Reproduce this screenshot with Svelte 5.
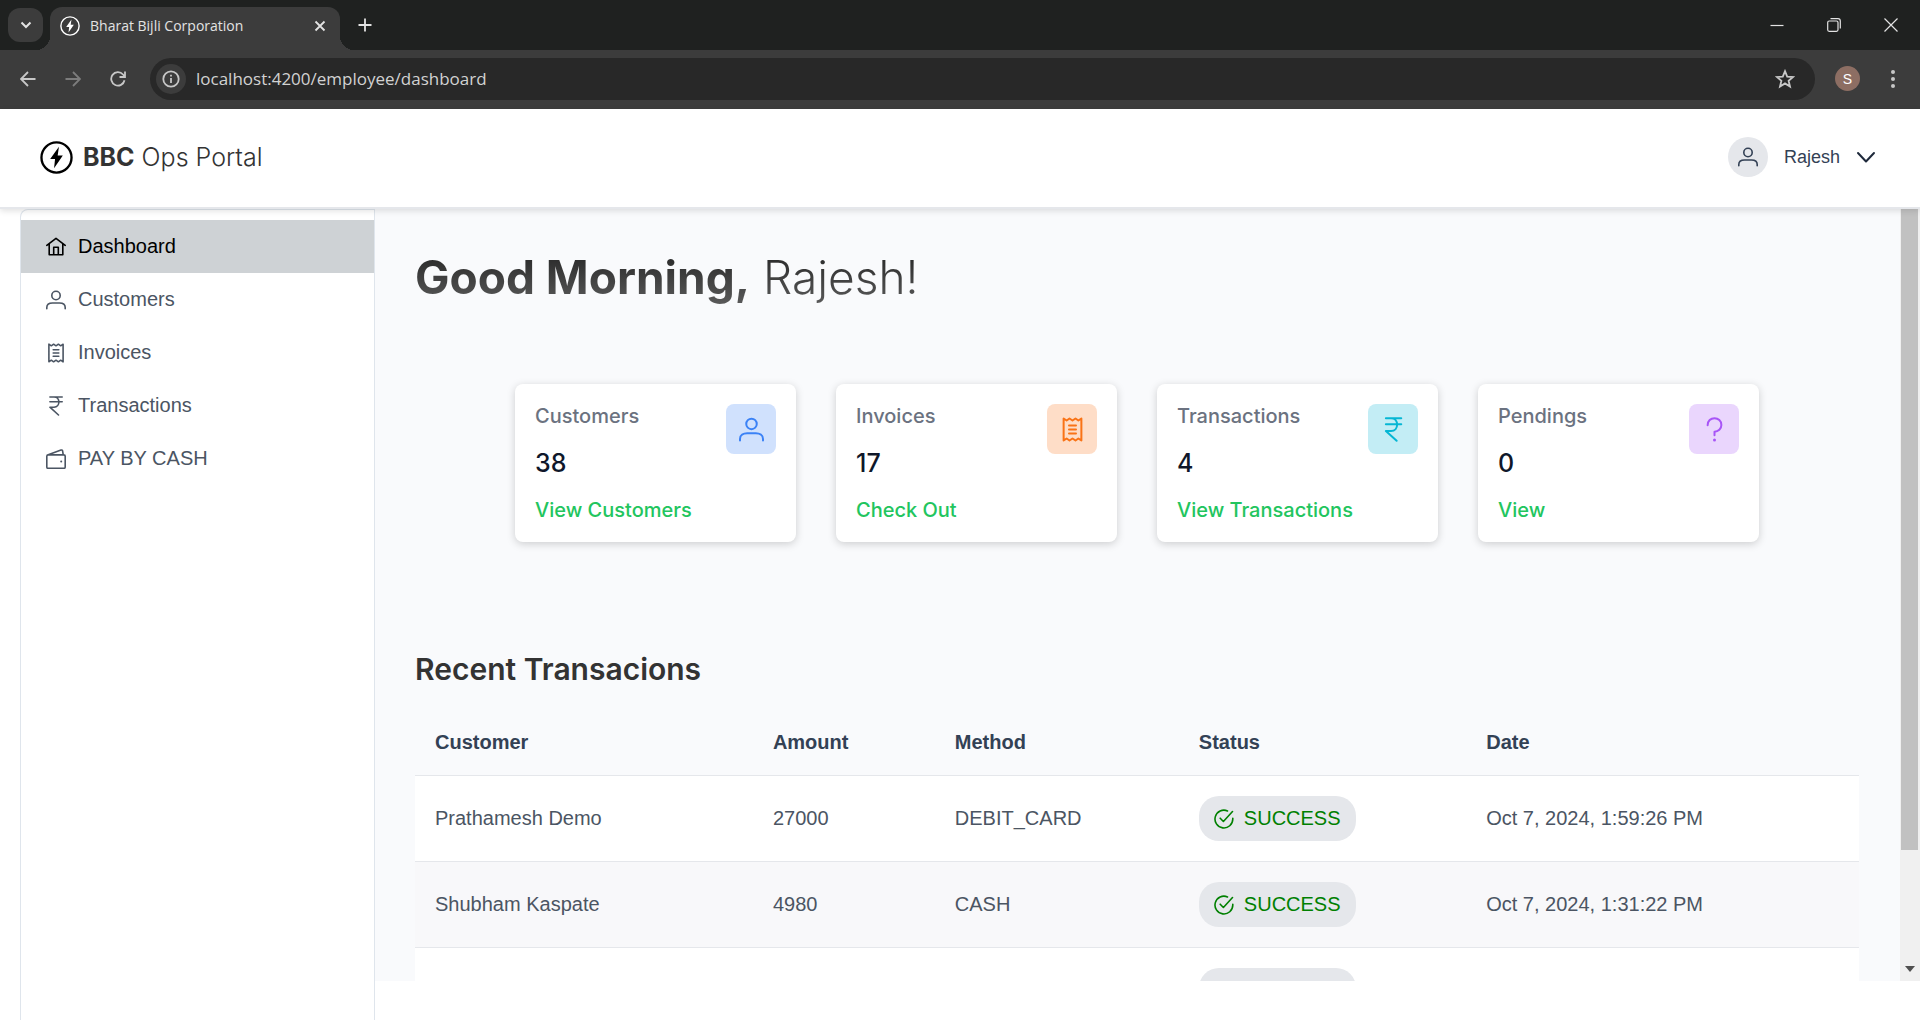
<script>
  const nav = [
    { label: 'Dashboard', icon: 'home', active: true },
    { label: 'Customers', icon: 'user' },
    { label: 'Invoices', icon: 'receipt' },
    { label: 'Transactions', icon: 'rupee' },
    { label: 'PAY BY CASH', icon: 'wallet' }
  ];
  const cards = [
    { title: 'Customers', value: 38, link: 'View Customers', icon: 'user', tone: 'blue' },
    { title: 'Invoices', value: 17, link: 'Check Out', icon: 'receipt', tone: 'orange' },
    { title: 'Transactions', value: 4, link: 'View Transactions', icon: 'rupee', tone: 'cyan' },
    { title: 'Pendings', value: 0, link: 'View', icon: 'question', tone: 'purple' }
  ];
  const rows = [
    { customer: 'Prathamesh Demo', amount: 27000, method: 'DEBIT_CARD', date: 'Oct 7, 2024, 1:59:26 PM' },
    { customer: 'Shubham Kaspate', amount: 4980, method: 'CASH', date: 'Oct 7, 2024, 1:31:22 PM' },
    { customer: '', amount: '', method: '', date: '' }
  ];
</script>

{#snippet icon(name)}
  <svg class="icon" viewBox="0 0 20 20" fill="none" stroke="currentColor" stroke-width="1.6" stroke-linecap="round" stroke-linejoin="round" aria-hidden="true">
    {#if name === 'home'}
      <path d="M.8 8.3 10 1.3l9.200 7M3.200 6.700V17.800H16.800V6.700M7.700 17.500V10.200H12.300V17.500" />
    {:else if name === 'user'}
      <circle cx="10" cy="5.500" r="4.200" />
      <path d="M.8 18.800V17.500C.8 14.500 3.500 13 6.500 13h7c3 0 5.700 1.500 5.700 4.500v1.300" />
    {:else if name === 'receipt'}
      <path d="M2.900 1.200V18.800L5.300 17.200L7.600 18.800L10 17.200L12.400 18.800L14.700 17.200L17.100 18.800V1.200L14.700 2.800L12.400 1.200L10 2.800L7.600 1.200L5.300 2.800ZM7.200 6.800H12.800M7.200 10H12.800M7.200 13.200H12.800" />
    {:else if name === 'rupee'}
      <path d="M3.900 1H16.200M3.900 5.700H16.200M8 1c6.500 0 6.500 10.200 0 10.200H3.900L12.500 19" />
    {:else if name === 'wallet'}
      <path d="M2.200 5.900H17.800Q19.200 5.900 19.200 7.300V17.900Q19.200 19.300 17.800 19.300H2.200Q.8 19.300.8 17.900V7.300Q.8 5.900 2.200 5.900ZM1.500 5.900 15 1.100Q16.200.7 16.600 1.800L17.200 5.600" />
      <circle cx="15.200" cy="12.500" r="1" fill="currentColor" stroke="none" />
    {:else if name === 'question'}
      <path d="M4.500 6.500C4.500 3 7 .9 10 .9s5.500 2.200 5.500 5.400c0 3.200-2.500 5.400-5.500 5.400V14.500" />
      <circle cx="10" cy="18.400" r="1.200" fill="currentColor" stroke="none" />
    {:else if name === 'check'}
      <path d="M18.800 9.200V10a8.900 8.900 0 1 1-5.300-8.100M6.200 9.200 9.400 12.500 18.500 2.500" />
    {:else if name === 'chevron'}
      <path stroke-width="2" d="M2 6 10 14.500 18 6" />
    {/if}
  </svg>
{/snippet}

{#snippet bolt()}
  <svg class="bolt" viewBox="0 0 34 34" aria-hidden="true">
    <circle cx="17" cy="17" r="15.500" fill="none" stroke="currentColor" stroke-width="2.400" />
    <path d="M19.500 6 10.500 18.500H15.500L14.500 28 23.500 15H18.200Z" fill="currentColor" />
  </svg>
{/snippet}

<div class="screen">
  <div class="tabs">
    <button class="tab-search" aria-label="Search tabs">
      <svg viewBox="0 0 12 12"><path d="M1.500 3.500 6 8l4.500-4.500" /></svg>
    </button>
    <div class="tab">
      {@render bolt()}
      <span>Bharat Bijli Corporation</span>
      <button aria-label="Close tab"><svg viewBox="0 0 12 12"><path d="M1.500 1.500l9 9M10.500 1.500l-9 9" /></svg></button>
    </div>
    <button class="new-tab" aria-label="New tab"><svg viewBox="0 0 14 14"><path d="M7 .5v13M.5 7h13" /></svg></button>
    <div class="window">
      <button aria-label="Minimize"><svg viewBox="0 0 14 14"><path d="M.5 7.500h13" /></svg></button>
      <button aria-label="Restore"><svg viewBox="0 0 14 14"><rect x=".7" y="3" width="10.300" height="10.300" rx="1.500" /><path d="M3.500.7H11A2.300 2.300 0 0 1 13.300 3v7.500" /></svg></button>
      <button aria-label="Close"><svg viewBox="0 0 14 14"><path d="M.5.5l13 13M13.500.5l-13 13" /></svg></button>
    </div>
  </div>
  <div class="toolbar">
    <button aria-label="Back"><svg viewBox="0 0 16 16"><path d="M15.500 8H1.500M8 1 1 8l7 7" /></svg></button>
    <button aria-label="Forward" class="dim"><svg viewBox="0 0 16 16"><path d="M.5 8h14M8 1l7 7-7 7" /></svg></button>
    <button aria-label="Reload"><svg viewBox="0 0 16 16"><path d="M14.500 9.200A6.700 6.700 0 1 1 13 3.500l1.800 2M15 .5V6H9.500" /></svg></button>
    <div class="address">
      <span class="info"><svg viewBox="0 0 18 18"><circle cx="9" cy="9" r="7.700" /><path d="M9 8v5M9 4.800v1.800" /></svg></span>
      <input aria-label="Address" value="localhost:4200/employee/dashboard" />
      <button aria-label="Bookmark"><svg class="star" viewBox="0 0 20 20"><path d="M10 2.200 12.200 7.600 18 8 13.600 11.800 15 17.500 10 14.400 5 17.500 6.400 11.800 2 8 7.800 7.600Z" /></svg></button>
    </div>
    <button class="profile" aria-label="Profile">S</button>
    <button aria-label="Menu" class="more"><svg viewBox="0 0 4 18"><circle cx="2" cy="2" r="2" /><circle cx="2" cy="9" r="2" /><circle cx="2" cy="16" r="2" /></svg></button>
  </div>

  <header>
    <a class="brand" href="#home">{@render bolt()}<span><b>BBC</b> Ops Portal</span></a>
    <button class="account"><span class="avatar">{@render icon('user')}</span>Rajesh {@render icon('chevron')}</button>
  </header>

  <div class="body">
    <nav>
      {#each nav as item}
        <a href="#{item.icon}" class:active={item.active}>{@render icon(item.icon)}<span>{item.label}</span></a>
      {/each}
    </nav>
    <div class="viewport">
      <main>
        <h1><b>Good Morning,</b> Rajesh!</h1>
        <section class="cards">
          {#each cards as card}
            <article>
              <div>
                <h2>{card.title}</h2>
                <p>{card.value}</p>
                <a href="#{card.icon}">{card.link}</a>
              </div>
              <span class="tile {card.tone}">{@render icon(card.icon)}</span>
            </article>
          {/each}
        </section>
        <h3>Recent Transacions</h3>
        <table>
          <colgroup><col class="c1" /><col class="c2" /><col class="c3" /><col class="c4" /><col /></colgroup>
          <thead><tr><th>Customer</th><th>Amount</th><th>Method</th><th>Status</th><th>Date</th></tr></thead>
          <tbody>
            {#each rows as row}
              <tr>
                <td>{row.customer}</td><td>{row.amount}</td><td>{row.method}</td>
                <td><span class="pill">{@render icon('check')}{row.customer ? 'SUCCESS' : ''}</span></td>
                <td>{row.date}</td>
              </tr>
            {/each}
          </tbody>
        </table>
      </main>
      <div class="scrollbar">
        <div class="thumb"></div>
        <svg viewBox="0 0 10 6"><path d="M0 0h10L5 6z" /></svg>
      </div>
    </div>
  </div>
</div>

<style>
  :global(body) { margin: 0; background: #fff; }
  .screen { display: flex; flex-direction: column; height: 100vh; overflow: hidden; font: 20px/24px "Liberation Sans", Arial, sans-serif; color: #4b5563; }
  .screen * { box-sizing: border-box; }
  button { border: 0; padding: 0; background: none; font: inherit; color: inherit; display: flex; align-items: center; justify-content: center; }
  a { color: inherit; text-decoration: none; }
  .icon { width: 20px; height: 20px; flex: none; }

  .tabs { display: flex; flex: none; height: 50px; padding-left: 8px; background: #1f2120; color: #e3e3e3; }
  .tabs svg, .toolbar svg { fill: none; stroke: currentColor; stroke-width: 1.8; flex: none; }
  .tab-search { width: 35px; height: 34px; margin: 8px 7px 0 0; border-radius: 12px; background: #3c3c3c; }
  .tab-search svg { width: 12px; height: 12px; stroke-width: 2; }
  .tab { position: relative; display: flex; align-items: center; width: 290px; height: 43px; margin-top: 7px; padding: 0 14px 6px 10px; border-radius: 12px 12px 0 0; background: #3c3c3c; font: 14px/20px "Open Sans", sans-serif; }
  .tab::before, .tab::after { content: ""; position: absolute; bottom: 0; width: 14px; height: 14px; }
  .tab::before { right: 100%; background: radial-gradient(circle at 0 0, transparent 14px, #3c3c3c 14px); }
  .tab::after { left: 100%; background: radial-gradient(circle at 100% 0, transparent 14px, #3c3c3c 14px); }
  .tab .bolt { width: 20px; height: 20px; margin-right: 10px; stroke: none; color: #fff; }
  .tab span { flex: 1; white-space: nowrap; }
  .tab button svg { width: 12px; height: 12px; }
  .new-tab { width: 50px; }
  .new-tab svg { width: 14px; height: 14px; }
  .window { display: flex; margin-left: auto; padding-right: 1px; }
  .window button { width: 57px; }
  .window svg { width: 14px; height: 14px; stroke-width: 1.2; }

  .toolbar { display: flex; align-items: center; flex: none; height: 59px; padding: 0 12px 2px 5px; background: #3c3c3c; color: #c7c7c7; }
  .toolbar > button { width: 45px; height: 40px; }
  .toolbar > button svg { width: 16px; height: 16px; }
  .toolbar .dim { color: #7c7c7c; }
  .address { display: flex; align-items: center; gap: 10px; flex: 1; height: 42px; margin: 0 20px 0 10px; padding: 0 20px 0 6px; border-radius: 21px; background: #282828; }
  .info { display: flex; align-items: center; justify-content: center; width: 30px; height: 30px; border-radius: 50%; background: #3c3c3c; }
  .info svg { width: 18px; height: 18px; }
  .address input { flex: 1; min-width: 0; border: 0; padding: 0; background: none; color: #d2d2d2; font: 17px/24px "Open Sans", sans-serif; outline: 0; }
  .star { width: 20px; height: 20px; }
  .toolbar > .profile { width: 25px; height: 25px; margin-right: 10px; border-radius: 50%; background: #8d6e63; color: #fff; font-size: 14px; }
  .toolbar > .more { width: 34px; margin-left: 6px; margin-right: -2px; }
  .toolbar > .more svg { width: 4px; height: 18px; fill: currentColor; stroke: none; }

  header { position: relative; z-index: 1; display: flex; align-items: center; justify-content: space-between; flex: none; height: 100px; padding: 0 44px 2px 40px; background: #fff; border-bottom: 2px solid #e5e7eb; box-shadow: 0 2px 6px rgba(0, 0, 0, .12); }
  .brand { display: flex; align-items: center; gap: 10px; font: 300 25px/32px Inter, sans-serif; color: #333; }
  .brand .bolt { width: 33px; height: 33px; color: #000; }
  .brand b { font-weight: 700; }
  .account { gap: 16px; font-size: 18px; color: #334155; }
  .account > .icon { color: #1e293b; }
  .avatar { display: flex; align-items: center; justify-content: center; width: 40px; height: 40px; border-radius: 50%; background: #e5e7eb; }

  .body { display: flex; flex: 1; min-height: 0; padding-left: 20px; }
  nav { flex: none; width: 355px; padding-top: 10px; border: 1px solid #dfe5ec; border-bottom: 0; border-radius: 8px 0 0 0; }
  nav a { display: flex; align-items: center; gap: 12px; height: 53px; padding: 0 25px; }
  nav span { padding-bottom: 2px; }
  nav .active { background: #ced2d5; color: #000; }

  .viewport { display: flex; flex: 1; min-width: 0; margin-bottom: 39px; overflow: hidden; background: #f9fafc; }
  main { flex: 1; min-width: 0; padding: 38px 41px 0 40px; }
  h1 { margin: 0 0 77px; font: 300 46px/60px Inter, sans-serif; color: transparent; background: linear-gradient(#222, #5c5c5c); background-clip: text; }
  h1 b { font-weight: 700; }
  .cards { display: grid; grid-template-columns: repeat(4, 1fr); gap: 40px; margin: 0 100px 108px; }
  article { display: flex; justify-content: space-between; padding: 20px; border-radius: 8px; background: #fff; box-shadow: 0 2px 8px rgba(0, 0, 0, .18); font: 500 20px/24px Inter, sans-serif; }
  article h2 { margin: 0; font: inherit; color: #6b7280; }
  article p { margin: 20px 0; font-size: 25px; line-height: 30px; color: #0f172a; }
  article a { color: #22c55e; white-space: nowrap; }
  article div { width: 0; }
  .tile { display: flex; align-items: center; justify-content: center; width: 50px; height: 50px; border-radius: 8px; }
  .tile :global(.icon) { width: 25px; height: 25px; }
  .blue { background: #d0e1fd; color: #3b82f6; }
  .orange { background: #feddc7; color: #f97316; }
  .cyan { background: #c3edf5; color: #06b6d4; }
  .purple { background: #ead6fd; color: #a855f7; }
  h3 { margin: 0 0 21px; font: 600 30px/39px Inter, sans-serif; color: #333; }

  table { width: 100%; border-collapse: separate; border-spacing: 0; table-layout: fixed; }
  .c1 { width: 23.4%; }
  .c2 { width: 12.6%; }
  .c3 { width: 16.9%; }
  .c4 { width: 19.9%; }
  th, td { padding: 20px; border-bottom: 1px solid #e5e7eb; text-align: left; line-height: 25px; }
  th { color: #334155; }
  td { padding-block: 0; height: 86px; background: #fff; }
  tr:nth-child(even) td { background: #f8f8fa; }
  .pill { display: inline-flex; align-items: center; gap: 10px; min-width: 157px; height: 45px; padding: 0 15px; border-radius: 20px; background: #e5e7eb; color: green; vertical-align: middle; }

  .scrollbar { display: flex; flex-direction: column; align-items: center; justify-content: space-between; flex: none; width: 20px; padding: 0 1px 9px 0; background: #f0f0f0; }
  .thumb { width: 17px; height: 84%; background: #c1c1c1; }
  .scrollbar svg { width: 10px; height: 6px; fill: #505050; }
</style>
